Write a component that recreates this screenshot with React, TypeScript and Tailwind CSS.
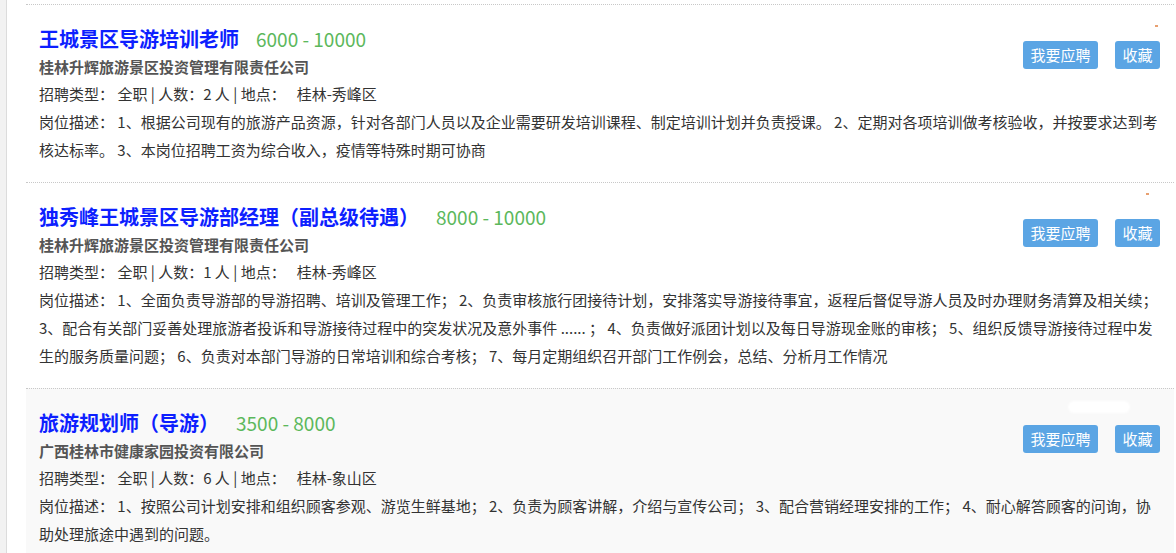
import React from "react";

type Job = {
  title: string;
  salary: string;
  company: string;
  kind: string;
  count: number;
  place: string;
  lines: string[];
  mark: "top" | "mid" | "blob";
  active?: boolean;
};

const jobs: Job[] = [
  {
    title: "王城景区导游培训老师",
    salary: "6000 - 10000",
    company: "桂林升辉旅游景区投资管理有限责任公司",
    kind: "全职",
    count: 2,
    place: "桂林-秀峰区",
    lines: [
      "1、根据公司现有的旅游产品资源，针对各部门人员以及企业需要研发培训课程、制定培训计划并负责授课。 2、定期对各项培训做考核验收，并按要求达到考",
      "核达标率。 3、本岗位招聘工资为综合收入，疫情等特殊时期可协商"
    ],
    mark: "mid"
  },
  {
    title: "独秀峰王城景区导游部经理（副总级待遇）",
    salary: "8000 - 10000",
    company: "桂林升辉旅游景区投资管理有限责任公司",
    kind: "全职",
    count: 1,
    place: "桂林-秀峰区",
    lines: [
      "1、全面负责导游部的导游招聘、培训及管理工作； 2、负责审核旅行团接待计划，安排落实导游接待事宜，返程后督促导游人员及时办理财务清算及相关续；",
      "3、配合有关部门妥善处理旅游者投诉和导游接待过程中的突发状况及意外事件 ...... ； 4、负责做好派团计划以及每日导游现金账的审核； 5、组织反馈导游接待过程中发",
      "生的服务质量问题； 6、负责对本部门导游的日常培训和综合考核； 7、每月定期组织召开部门工作例会，总结、分析月工作情况"
    ],
    mark: "top"
  },
  {
    title: "旅游规划师（导游）",
    salary: "3500 - 8000",
    company: "广西桂林市健康家园投资有限公司",
    kind: "全职",
    count: 6,
    place: "桂林-象山区",
    lines: [
      "1、按照公司计划安排和组织顾客参观、游览生鲜基地； 2、负责为顾客讲解，介绍与宣传公司； 3、配合营销经理安排的工作； 4、耐心解答顾客的问询，协",
      "助处理旅途中遇到的问题。"
    ],
    mark: "blob",
    active: true
  }
];

function JobItem({ job }: { job: Job }) {
  return (
    <li
      className={
        "relative border-t border-dotted border-[#c8c8c8] pl-[13px] pr-[9px] pt-[19px] pb-[18px] " +
        (job.active ? "bg-[#f9f9f9]" : "bg-white")
      }
    >
      {/* faded date marks in the top right corner */}
      {job.mark === "blob" && (
        <span className="absolute right-[44px] top-[12px] h-[12px] w-[62px] rounded-full bg-white blur-[1px]" />
      )}
      {job.mark === "mid" && <span className="absolute right-[16px] top-[20px] h-[2px] w-[3px] bg-[#e8a070]" />}
      {job.mark === "top" && <span className="absolute right-[25px] top-[10px] h-[2px] w-[3px] bg-[#e8a070]" />}

      <div className="flex items-start justify-between">
        <div>
          <div className="flex items-baseline leading-[30px]">
            <a href="#" className="text-[20px] font-bold text-[#0d1fff]">
              {job.title}
            </a>
            <span className="ml-[17px] text-[19px] text-[#5cb85c]">{job.salary}</span>
          </div>
          <p className="text-[15px] font-bold leading-[26px] text-[#555]">{job.company}</p>
          <p className="text-[15px] leading-[28px] text-[#333]">
            招聘类型： {job.kind} | 人数：{job.count} 人 | 地点：<span className="ml-[11px]">{job.place}</span>
          </p>
        </div>
        <div className="mr-[5px] mt-[17px] flex gap-[17px] text-[15px] text-white">
          <button className="h-[28px] w-[75px] rounded-[3px] bg-[#5ba5e4] leading-[28px]">我要应聘</button>
          <button className="h-[28px] w-[45px] rounded-[3px] bg-[#5ba5e4] leading-[28px]">收藏</button>
        </div>
      </div>

      <p className="text-[15px] leading-[28px] text-[#333]">
        {job.lines.map((line, i) => (
          <span key={i} className="block whitespace-nowrap">
            {i === 0 ? "岗位描述： " + line : line}
          </span>
        ))}
      </p>
    </li>
  );
}

export default function App() {
  return (
    <div
      className="flex h-[553px] overflow-hidden bg-white"
      style={{ fontFamily: '"Noto Sans CJK SC", "Noto Sans", sans-serif' }}
    >
      <div className="w-[7px] shrink-0 border-r border-[#dcdcdc] bg-[#f2f2f2]" />
      <main className="min-w-0 flex-1 pl-[19px] pr-[2px] pt-[4px]">
        <ul>
          {jobs.map((job) => (
            <JobItem key={job.title} job={job} />
          ))}
        </ul>
      </main>
    </div>
  );
}
